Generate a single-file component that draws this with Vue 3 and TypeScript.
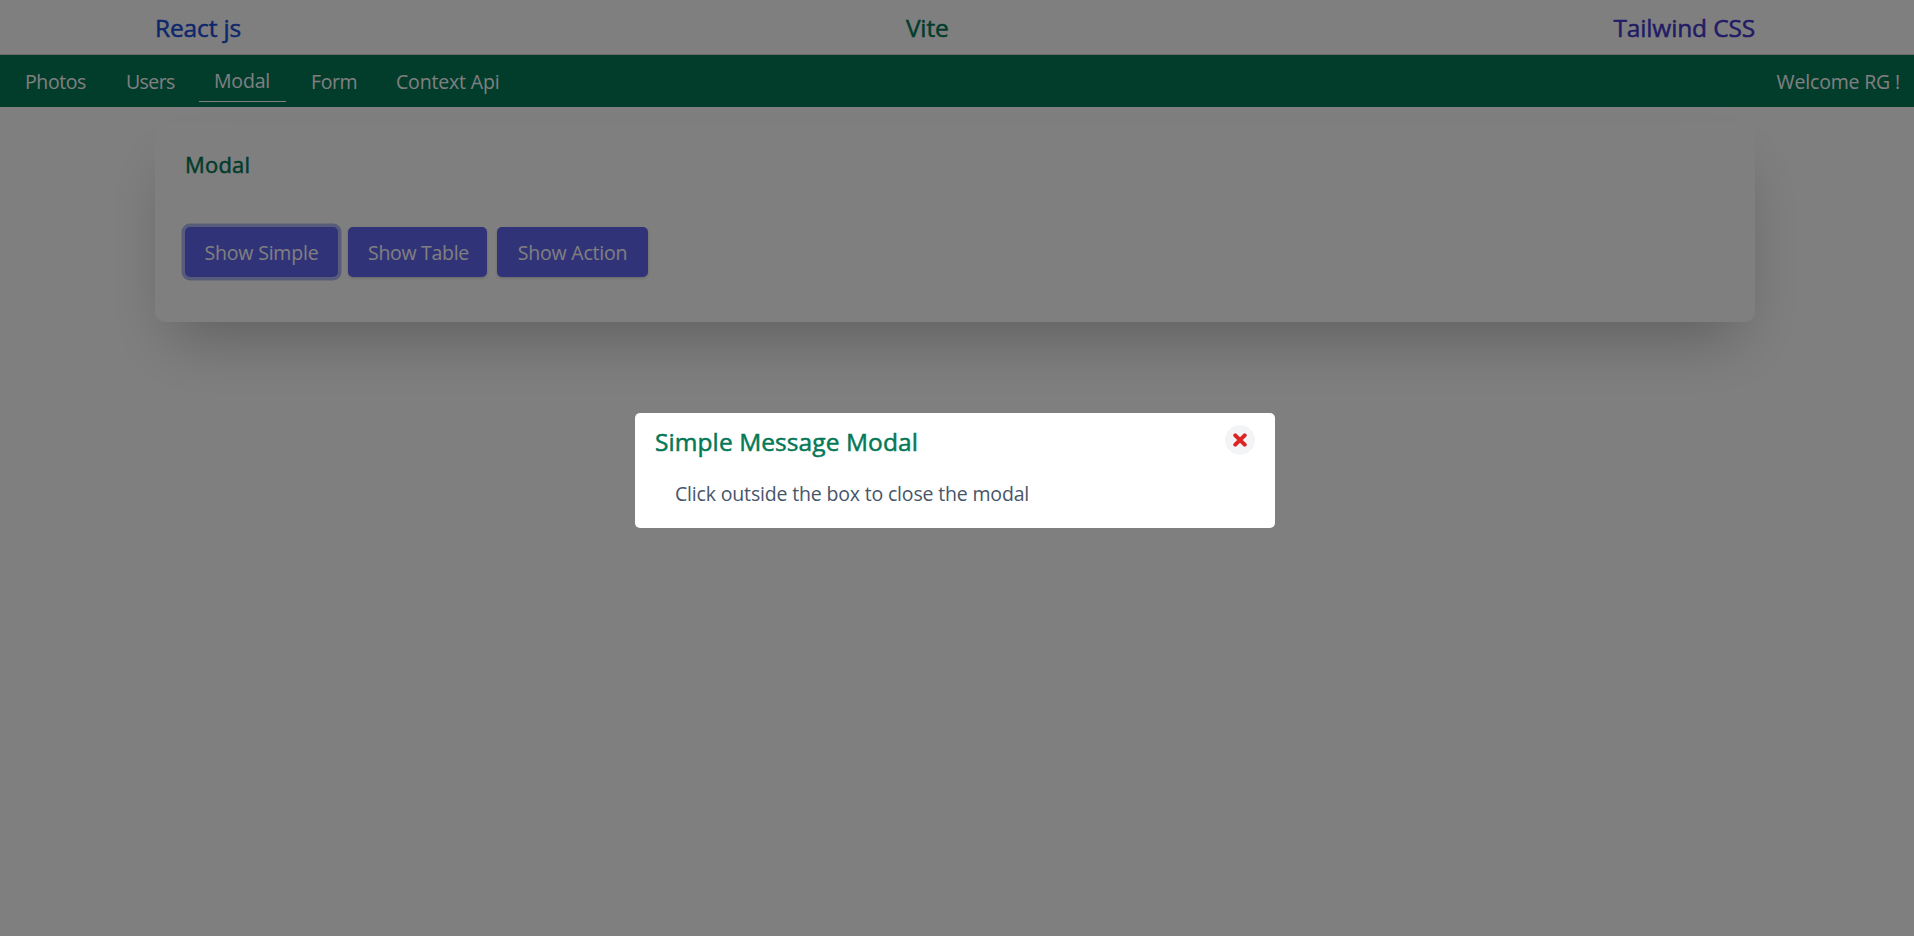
<script setup lang="ts">
import { ref } from 'vue'

const techs = [
  { label: 'React js', cls: 'react' },
  { label: 'Vite', cls: 'vite' },
  { label: 'Tailwind CSS', cls: 'tailwind' },
]
const links = [
  { label: 'Photos', cls: 'photos' },
  { label: 'Users', cls: 'users' },
  { label: 'Modal', cls: 'active' },
  { label: 'Form', cls: 'form' },
  { label: 'Context Api', cls: 'context' },
]
const buttons = [
  { label: 'Show Simple', cls: 'simple' },
  { label: 'Show Table', cls: 'table' },
  { label: 'Show Action', cls: 'action' },
]
const open = ref(true)
const focused = ref('simple')
function show(cls: string) {
  focused.value = cls
  open.value = true
}
</script>

<template>
  <div class="page">
    <header class="top">
      <span v-for="t in techs" :key="t.label" :class="['tech', t.cls]">{{ t.label }}</span>
    </header>
    <nav class="nav">
      <div class="links">
        <a v-for="l in links" :key="l.label" :class="['link', l.cls]"><span>{{ l.label }}</span></a>
      </div>
      <span class="welcome">Welcome RG !</span>
    </nav>
    <main class="panel">
      <h2 class="panel-title">Modal</h2>
      <div class="buttons">
        <button
          v-for="b in buttons"
          :key="b.label"
          :class="['btn', b.cls, { focused: focused === b.cls }]"
          @click="show(b.cls)"
        >{{ b.label }}</button>
      </div>
    </main>
    <div v-if="open" class="overlay" @click="open = false">
      <section class="dialog" @click.stop>
        <div class="dialog-head">
          <h3 class="dialog-title">Simple Message Modal</h3>
          <button class="close" aria-label="Close" @click="open = false">
            <svg width="14" height="14" viewBox="0 0 14 14">
              <path d="M2.3 2.3 11.7 11.7M11.7 2.3 2.3 11.7" fill="none" stroke="#dc2626" stroke-width="4" stroke-linecap="round" />
            </svg>
          </button>
        </div>
        <p class="dialog-text">Click outside the box to close the modal</p>
      </section>
    </div>
  </div>
</template>

<style>
body {
  margin: 0;
  background: #fff;
}
</style>

<style scoped>
.page {
  height: 936px;
  overflow: hidden;
  font-family: "Open Sans", "Noto Sans", sans-serif;
  font-size: 19.5px;
  line-height: 30px;
  letter-spacing: -0.17px;
}
.top {
  display: flex;
  justify-content: space-between;
  height: 54px;
  box-sizing: border-box;
  padding: 10px 159px 0 155px;
  font-size: 24.5px;
  line-height: 36px;
  letter-spacing: -0.15px;
  box-shadow: 0 1px 0 #d1d5db;
}
.tech,
.panel-title,
.dialog-title {
  white-space: nowrap;
  font-weight: 400;
  -webkit-text-stroke: 0.5px currentColor;
}
.react { color: #1d4ed8; }
.vite { color: #047857; }
.tailwind { color: #4338ca; }
.nav {
  display: flex;
  justify-content: space-between;
  height: 52px;
  margin-top: 1px;
  padding: 0 14px 0 10px;
  background: #047857;
  color: #fff;
}
.links {
  display: flex;
  gap: 10px;
  padding-top: 7px;
}
.link {
  box-sizing: border-box;
  height: 40px;
  padding: 5px 0 0 15px;
  white-space: nowrap;
}
.photos { width: 91px; letter-spacing: -0.4px; }
.users { width: 78px; letter-spacing: -0.6px; }
.form { width: 75px; letter-spacing: -0.4px; }
.active {
  width: 87px;
  padding-top: 4px;
  border-bottom: 1px solid #fff;
}
.welcome {
  padding-top: 12px;
  white-space: nowrap;
}
.panel {
  box-sizing: border-box;
  width: 1600px;
  height: 200px;
  margin: 15px 0 0 155px;
  padding: 27px 30px 0;
  border-radius: 10px;
  background: #fff;
  box-shadow: 0 31px 62px -15px rgba(0, 0, 0, 0.25);
}
.panel-title {
  margin: 0;
  font-size: 22px;
  line-height: 30px;
  letter-spacing: 0.2px;
  color: #047857;
}
.buttons {
  display: flex;
  gap: 10px;
  margin-top: 48px;
}
.btn {
  height: 50px;
  padding: 2px 0 0;
  border: 0;
  border-radius: 5px;
  background: #6366f1;
  color: #fff;
  font: inherit;
  letter-spacing: -0.2px;
  white-space: nowrap;
  box-shadow: 0 1px 3px rgba(0, 0, 0, 0.2);
}
.simple { width: 153px; }
.table { width: 139px; padding-left: 2px; letter-spacing: -0.3px; }
.action { width: 151px; }
.focused { box-shadow: 0 0 0 3.5px #adb9f5; }
.overlay {
  position: fixed;
  inset: 0;
  display: flex;
  align-items: flex-start;
  justify-content: center;
  padding: 413px 4px 0 0;
  background: rgba(0, 0, 0, 0.5);
}
.dialog {
  box-sizing: border-box;
  width: 640px;
  height: 115px;
  padding: 12px 20px 0;
  border-radius: 5px;
  background: #fff;
}
.dialog-head {
  display: flex;
  justify-content: space-between;
}
.dialog-title {
  margin: -1px 0 0;
  font-size: 24.5px;
  line-height: 36px;
  letter-spacing: 0.08px;
  color: #047857;
}
.close {
  display: flex;
  align-items: center;
  justify-content: center;
  width: 30px;
  height: 30px;
  padding: 0;
  border: 0;
  border-radius: 50%;
  background: #f3f4f6;
}
.dialog-text {
  margin: 19px 0 0 20px;
  color: #475569;
}
</style>
